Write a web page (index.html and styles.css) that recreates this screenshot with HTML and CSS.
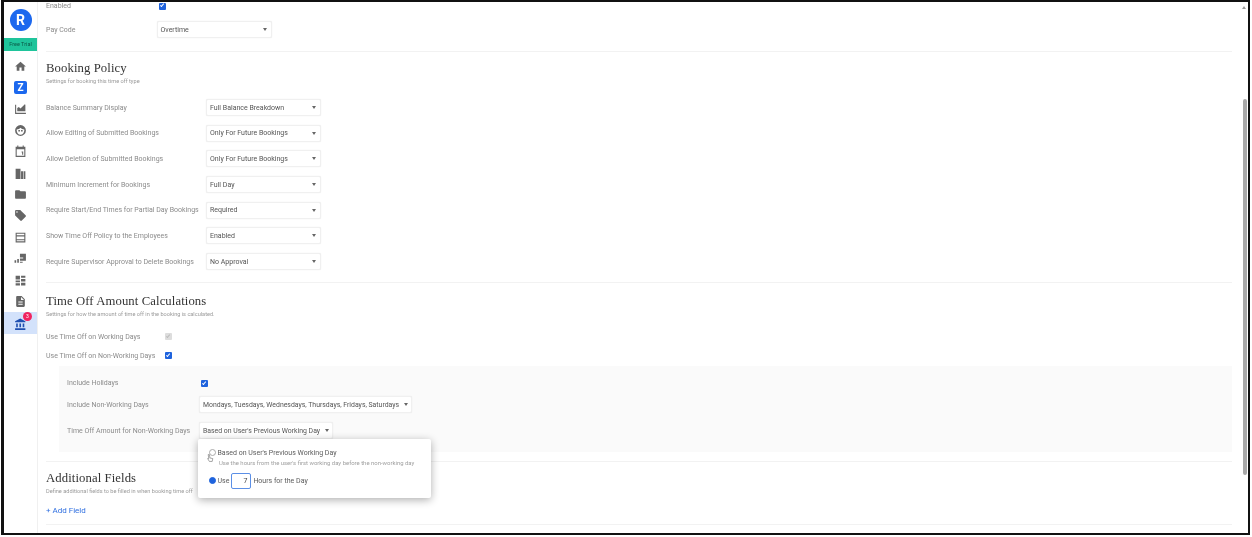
FILE: index.html
```html
<!DOCTYPE html>
<html>
  <head>
    <title>Time Off Type</title>
    <link rel="stylesheet" href="styles.css">
  </head>
  <body>
    <div class="frame">
      <div class="sidebar">
        <div class="logo">R</div>
        <div class="trial">Free Trial</div>
        <div class="navList">
          <div class="navItem"><svg viewBox="0 0 24 24"><path d="M10 20v-6h4v6h5v-8h3L12 3 2 12h3v8z"/></svg></div>
          <div class="navItem"><span class="zIcon">Z</span></div>
          <div class="navItem"><svg viewBox="0 0 24 24"><path d="M2 5h2v15h18v2H2zM6 11l3-2 3 3 8-8 1 1v12H6z"/></svg></div>
          <div class="navItem"><svg viewBox="0 0 24 24"><path fill-rule="evenodd" d="M12 2a10 10 0 1 0 0 20 10 10 0 0 0 0-20zm-7 8c3 0 5-1 7-3 2 2 4 3 7 3v2c0 4-3 8-7 8s-7-4-7-8zm3 1v3h3v-3zm5 0v3h3v-3z"/></svg></div>
          <div class="navItem"><svg viewBox="0 0 24 24"><path fill-rule="evenodd" d="M6 1h2v2h8V1h2v2h3v19H3V3h3zM5 8v12h14V8zm9 4h3v6h-2v-4h-1z"/></svg></div>
          <div class="navItem"><svg viewBox="0 0 24 24"><path d="M3 3h9v19H3zM13 8h4v14h-4zM18 8h3v14h-3z"/></svg></div>
          <div class="navItem"><svg viewBox="0 0 24 24"><path d="M10 4H4c-1.1 0-2 .9-2 2v12c0 1.1.9 2 2 2h16c1.1 0 2-.9 2-2V8c0-1.1-.9-2-2-2h-8l-2-2z"/></svg></div>
          <div class="navItem"><svg viewBox="0 0 24 24"><path d="M21.41 11.58l-9-9C12.05 2.22 11.55 2 11 2H4c-1.1 0-2 .9-2 2v7c0 .55.22 1.05.59 1.42l9 9c.36.36.86.58 1.41.58.55 0 1.05-.22 1.41-.59l7-7c.37-.36.59-.86.59-1.41 0-.55-.23-1.06-.59-1.42zM5.5 7C4.67 7 4 6.33 4 5.5S4.67 4 5.5 4 7 4.67 7 5.5 6.33 7 5.5 7z"/></svg></div>
          <div class="navItem"><svg viewBox="0 0 24 24"><path fill-rule="evenodd" d="M3 3h18v18H3zm2 2v3h14V5zm0 5v5h14v-5zm0 7v2h14v-2z"/></svg></div>
          <div class="navItem"><svg viewBox="0 0 24 24"><path d="M11 3h11v9h-5v-2h-6zM1 15h3v5H1zM6 13h3v7H6zM11 12h11v4H11zM11 18h5v2h-5z"/></svg></div>
          <div class="navItem"><svg viewBox="0 0 24 24"><path d="M3 3h8v7H3zM13 3h8v4h-8zM13 9h8v5h-8zM3 12h8v3H3zM3 17h8v4H3zM13 16h8v5h-8z"/></svg></div>
          <div class="navItem"><svg viewBox="0 0 24 24"><path d="M14 2H6c-1.1 0-2 .9-2 2v16c0 1.1.9 2 2 2h12c1.1 0 2-.9 2-2V8l-6-6zm2 16H8v-2h8v2zm0-4H8v-2h8v2zm-3-5V3.5L18.5 9H13z"/></svg></div>
          <div class="navItem active">
            <svg class="bank" viewBox="0 0 24 24"><path d="M4 10v7h3v-7H4zm6 0v7h3v-7h-3zM2 22h19v-3H2v3zm14-12v7h3v-7h-3zm-4.5-9L2 6v2h19V6l-9.5-5z"/></svg>
            <span class="badge">3</span>
          </div>
        </div>
      </div>

      <div class="main">
        <div class="content">
          <div class="topFields">
            <div class="row payRow">
              <span class="label">Enabled</span>
              <span class="check"></span>
            </div>
            <div class="row payRow">
              <span class="label">Pay Code</span>
              <div class="select policy"><span>Overtime</span><i class="caret"></i></div>
            </div>
          </div>

          <div class="section booking">
            <h2>Booking Policy</h2>
            <p class="sub">Settings for booking this time off type</p>
            <div class="rows">
              <div class="row"><span class="label">Balance Summary Display</span><div class="select policy"><span>Full Balance Breakdown</span><i class="caret"></i></div></div>
              <div class="row"><span class="label">Allow Editing of Submitted Bookings</span><div class="select policy"><span>Only For Future Bookings</span><i class="caret"></i></div></div>
              <div class="row"><span class="label">Allow Deletion of Submitted Bookings</span><div class="select policy"><span>Only For Future Bookings</span><i class="caret"></i></div></div>
              <div class="row"><span class="label">Minimum Increment for Bookings</span><div class="select policy"><span>Full Day</span><i class="caret"></i></div></div>
              <div class="row"><span class="label">Require Start/End Times for Partial Day Bookings</span><div class="select policy"><span>Required</span><i class="caret"></i></div></div>
              <div class="row"><span class="label">Show Time Off Policy to the Employees</span><div class="select policy"><span>Enabled</span><i class="caret"></i></div></div>
              <div class="row"><span class="label">Require Supervisor Approval to Delete Bookings</span><div class="select policy"><span>No Approval</span><i class="caret"></i></div></div>
            </div>
          </div>

          <div class="section amount">
            <h2>Time Off Amount Calculations</h2>
            <p class="sub">Settings for how the amount of time off in the booking is calculated.</p>
            <div class="checkRow first"><span class="label">Use Time Off on Working Days</span><span class="check off"></span></div>
            <div class="checkRow"><span class="label">Use Time Off on Non-Working Days</span><span class="check"></span></div>
            <div class="panel">
              <div class="panelRow holidays"><span class="label">Include Holidays</span><span class="check"></span></div>
              <div class="panelRow days"><span class="label">Include Non-Working Days</span><div class="select auto"><span>Mondays, Tuesdays, Wednesdays, Thursdays, Fridays, Saturdays</span><i class="caret"></i></div></div>
              <div class="panelRow hours">
                <span class="label">Time Off Amount for Non-Working Days</span>
                <div class="select auto"><span>Based on User's Previous Working Day</span><i class="caret"></i></div>
                <div class="popover">
                  <div class="option">
                    <span class="radio"></span>
                    <span class="optionText">Based on User's Previous Working Day</span>
                    <svg class="cursor" viewBox="0 0 12 14"><path d="M2 1l1 7-2 0 3 5h5l1-5-5-1-1-6z"/></svg>
                  </div>
                  <div class="optionHint">Use the hours from the user's first working day before the non-working day</div>
                  <div class="option useRow">
                    <span class="radio on"></span>
                    <span class="optionText">Use</span>
                    <span class="hoursInput">7</span>
                    <span class="optionText">Hours for the Day</span>
                  </div>
                </div>
              </div>
            </div>
          </div>

          <div class="section extra">
            <h2>Additional Fields</h2>
            <p class="sub">Define additional fields to be filled in when booking time off</p>
            <a class="addField">+ Add Field</a>
          </div>
          <div class="section"></div>
        </div>

        <div class="scrollbar">
          <i class="arrowUp"></i>
          <div class="thumb"></div>
        </div>
      </div>
    </div>
  </body>
</html>
```

FILE: styles.css
```css
html, body{
  margin: 0;
  height: 100%;
  background-color: #fff;
  overflow: hidden;
}
body{
  font-family: Roboto, "Liberation Sans", sans-serif;
  color: #8b8b8b;
}
.frame{
  display: flex;
  box-sizing: border-box;
  width: 1249px;
  height: 535px;
  margin-left: 1px;
  border: 2px solid #111;
  border-left-width: 3px;
  border-right-width: 2px;
  background-color: #fff;
  filter: blur(0.6px);
  overflow: hidden;
}

/* left nav */
.sidebar{
  flex: 0 0 33px;
  display: flex;
  flex-direction: column;
  align-items: center;
  border-right: 1px solid #f0f0f0;
}
.logo{
  width: 22px;
  height: 22px;
  margin-top: 7px;
  border-radius: 50%;
  background-color: #1c68ee;
  color: #fff;
  font-size: 14px;
  font-weight: 700;
  line-height: 22px;
  text-align: center;
}
.trial{
  align-self: stretch;
  height: 13px;
  margin-top: 7px;
  background-color: #1fc49b;
  color: #0b5a48;
  font-size: 5.5px;
  line-height: 13px;
  text-align: center;
}
.navList{
  align-self: stretch;
  display: flex;
  flex-direction: column;
  margin-top: 4.5px;
}
.navItem{
  position: relative;
  display: flex;
  align-items: center;
  justify-content: center;
  height: 21.4px;
}
.navItem svg{
  width: 13px;
  height: 13px;
  fill: #666;
}
.zIcon{
  width: 13px;
  height: 13px;
  border-radius: 2px;
  background-color: #1c68ee;
  color: #fff;
  font-size: 10px;
  font-weight: 700;
  line-height: 13px;
  text-align: center;
}
.active{
  background-color: #d3e2fb;
}
.navItem .bank{
  fill: #1f4fb0;
  margin-top: 3px;
}
.badge{
  position: absolute;
  top: -0.5px;
  right: 5px;
  width: 9px;
  height: 9px;
  border-radius: 50%;
  background-color: #f0245f;
  color: #fff;
  font-size: 5px;
  line-height: 9px;
  text-align: center;
}

/* main area */
.main{
  position: relative;
  flex: 1;
  overflow: hidden;
}
.content{
  margin-top: -4.5px;
  padding: 0 16px 0 8px;
}
.label{
  font-size: 7px;
  white-space: nowrap;
}
h2{
  margin: 0;
  font-family: "Liberation Serif", serif;
  font-size: 12.7px;
  font-weight: 400;
  line-height: 16px;
  letter-spacing: 0.1px;
  color: #333;
}
.sub{
  margin: 1px 0 0;
  font-size: 5.6px;
  line-height: 8px;
  color: #9a9a9a;
}
.section{
  border-top: 1px solid #f2f2f2;
}
.row{
  display: flex;
  align-items: center;
  height: 17px;
  margin-bottom: 8.7px;
}
.row .label{
  flex: 0 0 160px;
}
.topFields{
  padding-bottom: 6px;
}
.topFields .row{
  margin-bottom: 6.5px;
}
.topFields .row .label{
  flex-basis: 110.5px;
}
.topFields .check{
  margin-left: 2px;
}
.select{
  display: flex;
  align-items: center;
  justify-content: space-between;
  box-sizing: border-box;
  height: 17px;
  padding: 0 4px 0 3px;
  background-color: #fff;
  border: 1px solid #f0f0f0;
  border-radius: 2px;
  box-shadow: 0 0 1px rgba(0, 0, 0, 0.12);
  color: #555;
  font-size: 7px;
  white-space: nowrap;
}
.policy{
  width: 115px;
}
.auto{
  gap: 5px;
  padding-right: 3px;
  font-size: 6.9px;
}
.caret{
  width: 0;
  height: 0;
  border-left: 2.5px solid transparent;
  border-right: 2.5px solid transparent;
  border-top: 3px solid #666;
}
.check{
  box-sizing: border-box;
  display: inline-block;
  width: 7px;
  height: 7px;
  border-radius: 1px;
  background-color: #1f63dd;
  position: relative;
}
.check::after{
  content: "";
  position: absolute;
  left: 2.2px;
  top: 0.8px;
  width: 1.4px;
  height: 3px;
  border: solid #fff;
  border-width: 0 1px 1px 0;
  transform: rotate(40deg);
}
.check.off{
  background-color: #ddd;
}
.check.off::after{
  border-color: #bbb;
}

.booking{
  padding-top: 8px;
  padding-bottom: 3.5px;
}
.rows{
  margin-top: 14.5px;
}
.amount{
  padding-top: 9.5px;
  padding-bottom: 9px;
}
.checkRow{
  display: flex;
  align-items: center;
  height: 10px;
  margin-bottom: 9px;
}
.checkRow.first{
  margin-top: 14px;
}
.checkRow .label{
  flex: 0 0 119px;
}
.panel{
  margin-top: -4px;
  margin-left: 13px;
  padding: 9.5px 0 13px 8px;
  background-color: #fafafa;
}
.panelRow{
  display: flex;
  align-items: center;
}
.panelRow .label{
  flex: 0 0 132px;
}
.holidays{
  height: 16px;
}
.holidays .check{
  margin-left: 1.5px;
}
.days{
  margin-top: 5px;
}
.hours{
  position: relative;
  margin-top: 9px;
}

/* popover under the amount select */
.popover{
  position: absolute;
  left: 131px;
  top: 16.5px;
  z-index: 2;
  box-sizing: border-box;
  width: 233px;
  height: 59px;
  padding: 8px 11px;
  background-color: #fff;
  border-radius: 2px;
  box-shadow: 0 2px 8px rgba(0, 0, 0, 0.32);
}
.option{
  position: relative;
  display: flex;
  align-items: center;
  height: 12px;
}
.optionText{
  font-size: 7px;
  color: #5c5c5c;
  white-space: nowrap;
}
.optionHint{
  margin: 0 0 0 10px;
  font-size: 5.95px;
  line-height: 8px;
  color: #a0a0a0;
  white-space: nowrap;
}
.radio{
  box-sizing: border-box;
  flex: none;
  width: 7px;
  height: 7px;
  margin-right: 1.5px;
  border: 1px solid #aaa;
  border-radius: 50%;
}
.radio.on{
  border: 1.5px solid #1f63dd;
  background-color: #1f63dd;
}
.cursor{
  position: absolute;
  left: -2px;
  top: 7px;
  width: 7px;
  height: 8px;
  fill: #fff;
  stroke: #666;
  stroke-width: 1;
}
.useRow{
  margin-top: 6px;
  height: 16px;
}
.hoursInput{
  box-sizing: border-box;
  width: 20px;
  height: 16px;
  margin: 0 2px;
  padding-right: 3px;
  border: 1px solid #5b8fe6;
  border-radius: 2px;
  color: #444;
  font-size: 7px;
  line-height: 14px;
  text-align: right;
}

.extra{
  position: relative;
  padding-top: 7.5px;
  padding-bottom: 8px;
}
.addField{
  display: block;
  margin-top: 11px;
  color: #2f6fe0;
  font-size: 8px;
  line-height: 10px;
}

.scrollbar{
  position: absolute;
  top: 0;
  right: 0;
  bottom: 0;
  width: 6px;
}
.arrowUp{
  position: absolute;
  top: 4px;
  left: 0;
  width: 0;
  height: 0;
  border-left: 2.5px solid transparent;
  border-right: 2.5px solid transparent;
  border-bottom: 3px solid #999;
}
.thumb{
  margin-top: 97px;
  margin-left: 0.5px;
  width: 4.5px;
  height: 376px;
  border-radius: 2px;
  background-color: #a8a8a8;
}
```
